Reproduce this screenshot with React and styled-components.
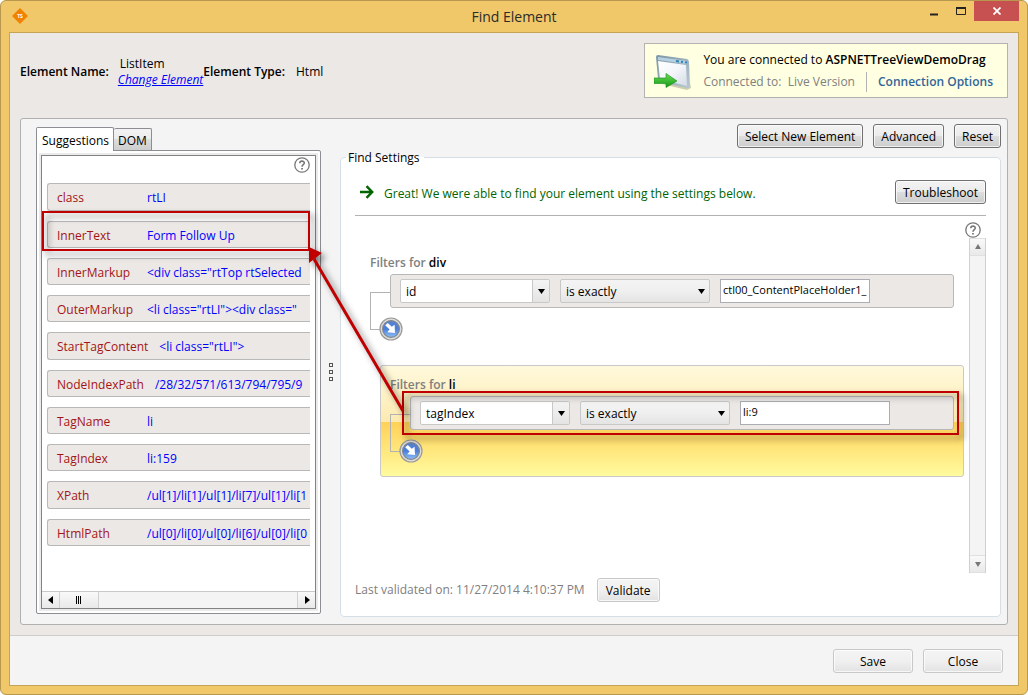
import React from 'react'
import styled, { createGlobalStyle, css } from 'styled-components'

const GlobalStyle = createGlobalStyle`
*{
box-sizing:border-box;
}
body{
margin:0;
background-color:white;
color:black;
font-family:"Open Sans","Noto Sans",sans-serif;
font-size:12px;
line-height:16px;
}
button,input,select{
font:inherit;
color:inherit;
margin:0;
}
`

const Window = styled.div`
min-height:100vh;
display:flex;
flex-direction:column;
padding:0 8px 8px;
border:1px solid #b8984f;
border-radius:6px;
background-color:#f0c869;
`

const TitleBar = styled.header`
height:31px;
display:grid;
grid-template-columns:1fr auto 1fr;
align-items:start;
`

const Logo = styled.svg`
margin:7px 0 0 3px;
`

const Title = styled.h1`
margin:6px 0 0;
font-size:14px;
line-height:20px;
font-weight:400;
color:#2b2b2b;
`

const WindowButtons = styled.div`
display:flex;
justify-content:flex-end;
`

const WindowButton = styled.button`
width:${props => props.$close ? '45px' : '27px'};
height:20px;
padding:0;
border:0;
display:flex;
align-items:center;
justify-content:center;
background-color:${props => props.$close ? '#c75050' : 'transparent'};
`

const Client = styled.main`
flex:1;
display:flex;
flex-direction:column;
border:1px solid #c5a456;
background-color:#ece8e5;
`

const Header = styled.div`
display:flex;
justify-content:space-between;
align-items:flex-start;
padding:10px 10px 20px;
`

const ElementInfo = styled.dl`
display:flex;
align-items:center;
margin:9px 0 0;
height:40px;
`

const InfoLabel = styled.dt`
font-weight:600;
`

const InfoValue = styled.dd`
margin:0 0 0 ${props => props.$wide ? '11px' : '9px'};
display:flex;
flex-direction:column;
`

const ElementName = styled.span`
padding-left:2px;
`

const ChangeLink = styled.a`
color:#0000ff;
font-style:italic;
`

const Connection = styled.section`
display:flex;
align-items:center;
gap:10px;
height:55px;
padding:2px 14px 0 9px;
border:1px solid #b2b2b2;
background-color:#ffffe1;
`

const ConnectionText = styled.div`
display:flex;
flex-direction:column;
gap:4px;

p{
margin:0;
}
strong{
font-weight:600;
}
`

const ConnectionLine = styled.div`
display:flex;
align-items:center;
color:#808080;

a{
height:20px;
line-height:20px;
margin-left:11px;
padding-left:11px;
border-left:1px solid #b2b2b2;
color:#33669a;
font-weight:600;
text-decoration:none;
}
`

const Panel = styled.div`
flex:1;
position:relative;
display:flex;
margin:0 10px 10px;
border:1px solid #b0b0b0;
border-radius:3px;
background-color:#f4f4f4;
`

const Sidebar = styled.section`
flex:0 0 285px;
min-width:0;
display:flex;
flex-direction:column;
margin:8px 0 10px 15px;
`

const Tabs = styled.div`
display:flex;
align-items:flex-end;
`

const Tab = styled.button`
height:22px;
padding:2px 4px 0;
border:1px solid #8c8e94;
border-left:0;
border-bottom:0;
border-radius:2px 2px 0 0;
background:linear-gradient(#f3f3f3,#ebebeb 50%,#dddddd 50%,#cdcdcd);

${props => props.$active && css`
height:24px;
margin-bottom:-1px;
padding-left:5px;
border-left:1px solid #8c8e94;
background:white;
z-index:1;
`}
`

const TabPanel = styled.div`
flex:1;
display:flex;
padding:2px;
border:1px solid #8c8e94;
border-radius:0 2px 2px 2px;
background-color:white;
`

const TabInner = styled.div`
flex:1;
min-width:0;
display:flex;
padding:2px;
background-color:#ebebeb;
`

const ListFrame = styled.div`
flex:1;
min-width:0;
display:flex;
flex-direction:column;
border:1px solid #828282;
background-color:white;
`

const HelpButton = styled.button`
align-self:flex-end;
width:16px;
height:16px;
padding:0;
border:0;
background:none;
display:flex;
flex-shrink:0;
`

const HelpRow = styled.div`
display:flex;
justify-content:flex-end;
padding:1px 5px 10px;
`

const SuggestionList = styled.ul`
flex:1;
margin:0;
padding:0 5px;
list-style:none;
`

const Suggestion = styled.li`
position:relative;
height:27px;
margin-bottom:10px;

&:nth-child(4n+1){
height:28px;
}
`

const SuggestionRow = styled.div`
display:flex;
align-items:center;
gap:11px;
height:100%;
padding:2px 0 0 9px;
border:1px solid #b8b8b8;
border-right:0;
border-radius:3px 0 0 3px;
background-color:#ece8e5;
overflow:hidden;
white-space:nowrap;
`

const SuggestionName = styled.span`
flex:0 0 auto;
min-width:79px;
color:#a31515;
`

const SuggestionValue = styled.span`
color:#0000ff;
`

const HScroll = styled.div`
display:flex;
height:17px;
border-top:1px solid #c9c9c9;
background-color:#f4f4f4;
`

const ScrollPart = styled.button`
width:${props => props.$thumb ? '39px' : '18px'};
height:${props => props.$vertical ? '18px' : '16px'};
flex-shrink:0;
padding:0;
border:1px solid ${props => props.$vertical ? '#e0e0e0' : '#d0d0d0'};
border-width:${props => props.$vertical ? '1px 0' : '0 1px 0 0'};
display:flex;
align-items:center;
justify-content:center;
background:linear-gradient(#f9f9f9,#e9e9e9);

${props => props.$end && css`
margin-left:auto;
border-width:0 0 0 1px;
`}
`

const Splitter = styled.div`
flex:0 0 19px;
display:flex;
flex-direction:column;
align-items:center;
justify-content:center;
gap:3px;
`

const Grip = styled.span`
width:4px;
height:4px;
border:1px solid #555555;
`

const Settings = styled.section`
flex:1;
min-width:0;
display:flex;
flex-direction:column;
padding:5px 6px 7px 0;
`

const Toolbar = styled.div`
display:flex;
justify-content:flex-end;
gap:10px;
`

const Button = styled.button`
height:24px;
padding:2px 7px 0;
border:1px solid #707070;
border-radius:3px;
background:linear-gradient(#f3f3f3,#ebebeb 50%,#dddddd 50%,#cdcdcd);
box-shadow:inset 0 0 0 1px rgba(255,255,255,0.7);
white-space:nowrap;
`

const LightButton = styled(Button)`
min-width:${props => props.$wide ? '80px' : '63px'};
padding-top:1px;
border-color:#c8c8c8;
background:linear-gradient(#f4f4f4,#f0f0f0 50%,#e2e2e2);
`

const Group = styled.fieldset`
flex:1;
min-width:0;
display:flex;
flex-direction:column;
margin:0;
padding:0 14px 14px;
border:1px solid #d5dfe5;
border-radius:4px;
background-color:white;

legend{
margin-left:-9px;
padding:2px 4px 0 2px;
}
`

const StatusRow = styled.div`
display:flex;
align-items:center;
padding:14px 0 11px 5px;
border-bottom:1px solid #b2b2b2;

p{
flex:1;
margin:0 0 0 10px;
padding-top:3px;
color:#006400;
}
`

const FilterArea = styled.div`
flex:1;
display:flex;
padding-top:6px;
`

const Filters = styled.div`
flex:1;
min-width:0;
padding:33px 2px 0 15px;
`

const ScrollColumn = styled.div`
display:flex;
flex-direction:column;
align-items:flex-end;
width:21px;
margin-left:-1px;

${HelpButton}{
align-self:flex-start;
}
`

const VScroll = styled.div`
flex:1;
width:17px;
display:flex;
flex-direction:column;
justify-content:space-between;
border:1px solid #d0d0d0;
border-width:0 1px;
background-color:#f4f4f4;

button{
width:15px;
}
`

const FilterGroup = styled.section`
padding:0 10px 0 0;

h2{
margin:0 0 3px;
font-size:12px;
line-height:16px;
font-weight:600;
color:#808080;
}
h2 span{
color:black;
}

${props => props.$selected && css`
margin:36px 0 0 10px;
padding:11px 9px 25px;
border:1px solid #c9c9c9;
border-radius:3px;
background:linear-gradient(#fff9dc,#fdeab0 51%,#ffd158 51%,#fffb9f);
`}
`

const FilterBox = styled.div`
position:relative;
display:flex;
align-items:center;
gap:10px;
height:34px;
margin-left:20px;
padding-left:9px;
border:1px solid #b8b8b8;
border-radius:3px;
background-color:#ece8e5;
`

const Branch = styled.div`
display:flex;
height:37px;
margin-top:-16px;
`

const BranchLine = styled.span`
width:20px;
flex-shrink:0;
height:38px;
border:1px solid #b2b2b2;
border-right:0;
`

const AddButton = styled.button`
position:relative;
align-self:flex-end;
width:24px;
height:24px;
margin:0 0 -12px -11px;
padding:0;
border:0;
background:none;
display:flex;
`

const Combo = styled.label`
display:grid;
grid-template-columns:1fr 17px;
width:150px;
height:24px;
border:1px solid #c8c8c8;
border-radius:2px;
background:${props => props.$editable ? 'white' : 'linear-gradient(#f4f4f4,#efefef 50%,#e4e4e4)'};
`

const ComboSelect = styled.select`
grid-area:1 / 1 / 2 / 3;
min-width:0;
padding:2px 5px 0;
border:0;
background:none;
appearance:none;
`

const ComboArrow = styled.span`
grid-area:1 / 2;
display:flex;
align-items:center;
justify-content:center;
pointer-events:none;

${props => props.$editable && css`
border-left:1px solid #c8c8c8;
background:linear-gradient(#f4f4f4,#e4e4e4);
`}
`

const TextBox = styled.input`
width:150px;
height:24px;
padding:0 2px 4px;
border:1px solid #abadb3;
border-radius:0;
background-color:white;
font-size:11px;
`

const ValidateRow = styled.div`
display:flex;
align-items:center;
gap:12px;
margin-top:5px;
color:#808080;

button{
color:black;
}
`

const Footer = styled.footer`
display:flex;
justify-content:flex-end;
gap:10px;
padding:13px 15px 12px;
border-top:1px solid #cccccc;
background-color:#f4f4f4;
`

const Callout = styled.span`
position:absolute;
inset:${props => props.$inset};
z-index:2;
border:2px solid #c00000;
filter:drop-shadow(4px 4px 3px rgba(0,0,0,0.5));
pointer-events:none;
`

const CalloutArrow = styled.svg`
position:absolute;
left:280px;
top:120px;
z-index:3;
pointer-events:none;
filter:drop-shadow(4px 4px 3px rgba(0,0,0,0.5));
`

const suggestions = [
  { name: 'class', value: 'rtLI' },
  { name: 'InnerText', value: 'Form Follow Up', marked: true },
  { name: 'InnerMarkup', value: '<div class="rtTop rtSelected' },
  { name: 'OuterMarkup', value: '<li class="rtLI"><div class="' },
  { name: 'StartTagContent', value: '<li class="rtLI">' },
  { name: 'NodeIndexPath', value: '/28/32/571/613/794/795/9' },
  { name: 'TagName', value: 'li' },
  { name: 'TagIndex', value: 'li:159' },
  { name: 'XPath', value: '/ul[1]/li[1]/ul[1]/li[7]/ul[1]/li[1' },
  { name: 'HtmlPath', value: '/ul[0]/li[0]/ul[0]/li[6]/ul[0]/li[0' },
]

const Help = () => (
  <HelpButton aria-label="Help">
    <svg width="16" height="16" viewBox="0 0 16 16" fill="none" stroke="#777777">
      <circle cx="8" cy="8" r="7.2" strokeWidth="1.3" />
      <path d="M5.8 6.2C5.8 3.4 10.3 3.5 10.3 6C10.3 7.6 8 7.7 8 9.8" strokeWidth="1.6" />
      <path d="M8 10.9V12.6" strokeWidth="1.8" />
    </svg>
  </HelpButton>
)

const Triangle = ({ points, color = 'black' }) => (
  <svg width="8" height="8" viewBox="0 0 8 8" fill={color}>
    <polygon points={points} />
  </svg>
)

const ConnectionIcon = () => (
  <svg width="39" height="40" viewBox="0 0 39 40">
    <defs>
      <linearGradient id="frame" x1="0" y1="0" x2="1" y2="1">
        <stop offset="0" stopColor="#7c96a6" />
        <stop offset="1" stopColor="#b9c8d0" />
      </linearGradient>
      <linearGradient id="page" x1="0" y1="0" x2="1" y2="1">
        <stop offset="0" stopColor="#ffffff" />
        <stop offset="0.5" stopColor="#f4f6fa" />
        <stop offset="1" stopColor="#d3dbe6" />
      </linearGradient>
      <linearGradient id="go" x1="0" y1="0" x2="0" y2="1">
        <stop offset="0" stopColor="#6fdc5a" />
        <stop offset="1" stopColor="#119a11" />
      </linearGradient>
    </defs>
    <path d="M8 32L33 38L37 36L36 31Z" fill="#b9b99a" opacity="0.7" />
    <path d="M4 3L33 7Q35 8 35 10L36 34Q36 37 33 36L6 30Q4 29 4 27L2 5Q2 3 4 3Z" fill="url(#frame)" />
    <path d="M4 9L32 13L33 34L6 27Z" fill="url(#page)" />
    <path d="M4 5L33 9L33 12L4 8Z" fill="#b5d0df" />
    <path d="M22 9L25 9.4M27 9.7L29 10M31 10.2L33 10.5" stroke="#2e82b8" strokeWidth="2" />
    <path d="M0 26H12V21.5L23 29L12 35.5V31.5H0Z" fill="url(#go)" stroke="#158a15" strokeWidth="0.6" />
  </svg>
)

const AddFilter = () => (
  <AddButton aria-label="Add filter">
    <svg width="24" height="24" viewBox="0 0 24 24">
      <defs>
        <linearGradient id="ball" x1="0" y1="0" x2="0" y2="1">
          <stop offset="0" stopColor="#5a83cf" />
          <stop offset="0.5" stopColor="#4a7fdc" />
          <stop offset="1" stopColor="#8fc0fa" />
        </linearGradient>
      </defs>
      <circle cx="12" cy="12" r="11" fill="#dcdcd8" stroke="#9a9a9a" strokeWidth="1.2" />
      <circle cx="12" cy="12" r="8.4" fill="url(#ball)" stroke="#82858c" strokeWidth="1.2" />
      <path d="M6.2 8.2L8.8 6L12.8 9.8L15.6 7.8L16 16L8.2 15.2L10.6 12.4Z" fill="white" />
    </svg>
  </AddButton>
)

const Filter = ({ tag, field, value, selected }) => (
  <FilterGroup $selected={selected}>
    <h2>Filters for <span>{tag}</span></h2>
    <FilterBox>
      <Combo $editable>
        <ComboSelect aria-label="Attribute" defaultValue={field}>
          <option>{field}</option>
        </ComboSelect>
        <ComboArrow $editable><Triangle points="1,2 8,2 4.5,7" /></ComboArrow>
      </Combo>
      <Combo>
        <ComboSelect aria-label="Comparison" defaultValue="is exactly">
          <option>is exactly</option>
        </ComboSelect>
        <ComboArrow><Triangle points="1,2 8,2 4.5,7" /></ComboArrow>
      </Combo>
      <TextBox aria-label="Value" defaultValue={value} />
      {selected && <Callout $inset="-6px -6px -6px -9px" />}
    </FilterBox>
    <Branch>
      <BranchLine />
      <AddFilter />
    </Branch>
  </FilterGroup>
)

const App = () => {
  return (
    <>
      <GlobalStyle />
      <Window>
        <TitleBar>
          <Logo width="16" height="16" viewBox="0 0 16 16">
            <path d="M8 0L16 8L8 16L0 8Z" fill="#f08200" />
            <text x="8" y="10" textAnchor="middle" fontSize="5" fontWeight="700" fill="white">TS</text>
          </Logo>
          <Title>Find Element</Title>
          <WindowButtons>
            <WindowButton aria-label="Minimize">
              <svg width="10" height="10"><path d="M1 8.5H9" stroke="#222222" strokeWidth="2" /></svg>
            </WindowButton>
            <WindowButton aria-label="Maximize">
              <svg width="10" height="8" fill="none" stroke="#222222">
                <path d="M0 1H10" strokeWidth="2" />
                <path d="M0.5 1V7.5H9.5V1" />
              </svg>
            </WindowButton>
            <WindowButton $close aria-label="Close window">
              <svg width="8" height="8"><path d="M0.5 0.5L7.5 7.5M7.5 0.5L0.5 7.5" stroke="white" strokeWidth="1.8" /></svg>
            </WindowButton>
          </WindowButtons>
        </TitleBar>
        <Client>
          <Header>
            <ElementInfo>
              <InfoLabel>Element Name:</InfoLabel>
              <InfoValue>
                <ElementName>ListItem</ElementName>
                <ChangeLink href="#change">Change Element</ChangeLink>
              </InfoValue>
              <InfoLabel>Element Type:</InfoLabel>
              <InfoValue $wide>Html</InfoValue>
            </ElementInfo>
            <Connection>
              <ConnectionIcon />
              <ConnectionText>
                <p>You are connected to <strong>ASPNETTreeViewDemoDrag</strong></p>
                <ConnectionLine>
                  Connected to:&nbsp; Live Version
                  <a href="#options">Connection Options</a>
                </ConnectionLine>
              </ConnectionText>
            </Connection>
          </Header>
          <Panel>
            <Sidebar>
              <Tabs role="tablist">
                <Tab role="tab" aria-selected="true" $active>Suggestions</Tab>
                <Tab role="tab" aria-selected="false">DOM</Tab>
              </Tabs>
              <TabPanel role="tabpanel">
                <TabInner>
                  <ListFrame>
                    <HelpRow><Help /></HelpRow>
                    <SuggestionList>
                      {suggestions.map(item => (
                        <Suggestion key={item.name}>
                          <SuggestionRow>
                            <SuggestionName>{item.name}</SuggestionName>
                            <SuggestionValue>{item.value}</SuggestionValue>
                          </SuggestionRow>
                          {item.marked && <Callout $inset="-10px 0 -3px -5px" />}
                        </Suggestion>
                      ))}
                    </SuggestionList>
                    <HScroll>
                      <ScrollPart aria-label="Scroll left"><Triangle points="6,0 6,8 1,4" /></ScrollPart>
                      <ScrollPart $thumb aria-label="Scroll position">
                        <svg width="6" height="8"><path d="M0.5 0V8M2.5 0V8M4.5 0V8" stroke="black" /></svg>
                      </ScrollPart>
                      <ScrollPart $end aria-label="Scroll right"><Triangle points="2,0 2,8 7,4" /></ScrollPart>
                    </HScroll>
                  </ListFrame>
                </TabInner>
              </TabPanel>
            </Sidebar>
            <Splitter>
              <Grip />
              <Grip />
              <Grip />
            </Splitter>
            <Settings>
              <Toolbar>
                <Button>Select New Element</Button>
                <Button>Advanced</Button>
                <Button>Reset</Button>
              </Toolbar>
              <Group>
                <legend>Find Settings</legend>
                <StatusRow>
                  <svg width="14" height="14" viewBox="0 0 14 14" fill="none" stroke="#006400" strokeWidth="2.4">
                    <path d="M0 7H12M6.5 1.2L12.2 7L6.5 12.8" />
                  </svg>
                  <p>Great! We were able to find your element using the settings below.</p>
                  <Button>Troubleshoot</Button>
                </StatusRow>
                <FilterArea>
                  <Filters>
                    <Filter tag="div" field="id" value="ctl00_ContentPlaceHolder1_" />
                    <Filter tag="li" field="tagIndex" value="li:9" selected />
                  </Filters>
                  <ScrollColumn>
                    <Help />
                    <VScroll>
                      <ScrollPart $vertical aria-label="Scroll up"><Triangle points="1,6 7,6 4,1" color="#777777" /></ScrollPart>
                      <ScrollPart $vertical aria-label="Scroll down"><Triangle points="1,2 7,2 4,7" color="#777777" /></ScrollPart>
                    </VScroll>
                  </ScrollColumn>
                </FilterArea>
                <ValidateRow>
                  <span>Last validated on: 11/27/2014 4:10:37 PM</span>
                  <LightButton>Validate</LightButton>
                </ValidateRow>
              </Group>
            </Settings>
            <CalloutArrow width="110" height="180" viewBox="0 0 110 180">
              <path d="M102 172L13 20" stroke="#c00000" strokeWidth="3" />
              <polygon points="8,8 21,14 8,24" fill="#c00000" />
            </CalloutArrow>
          </Panel>
          <Footer>
            <LightButton $wide>Save</LightButton>
            <LightButton $wide>Close</LightButton>
          </Footer>
        </Client>
      </Window>
    </>
  )
}

export default App
